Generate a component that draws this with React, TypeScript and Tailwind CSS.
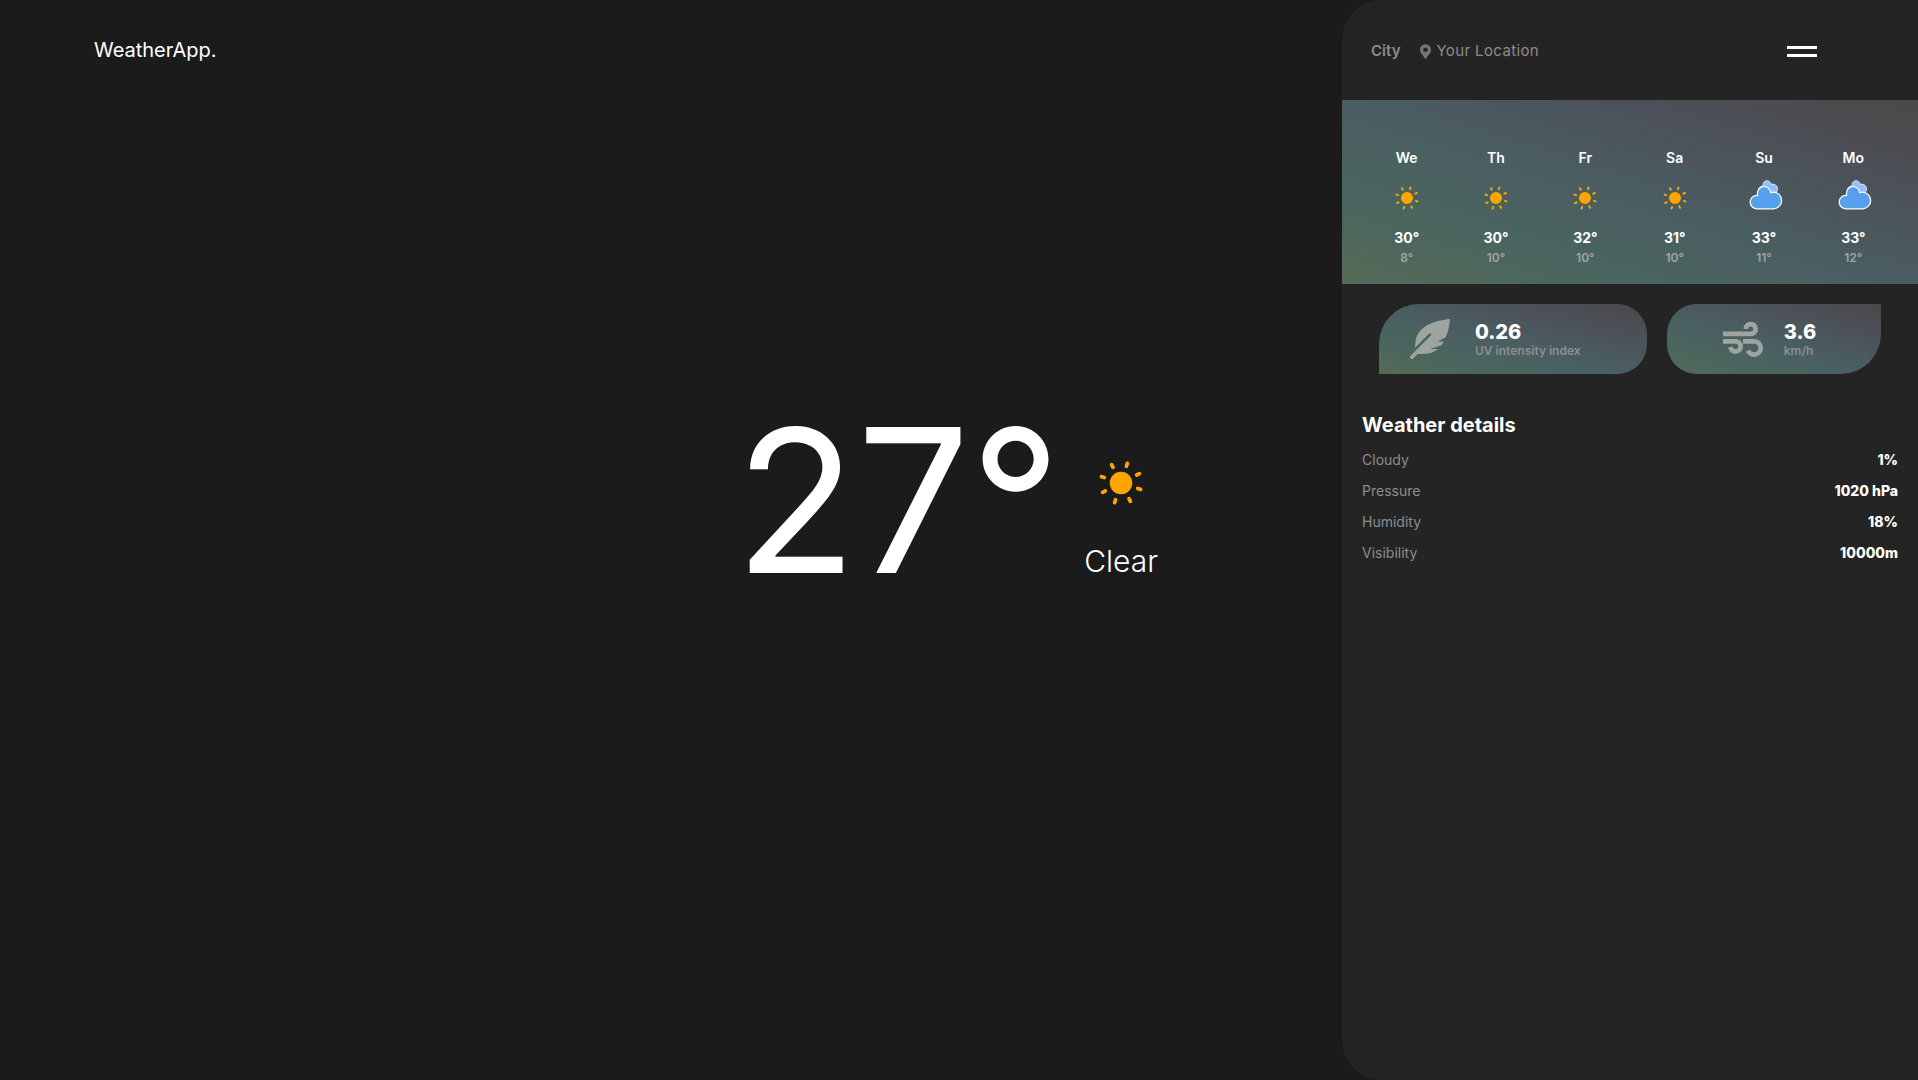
import { FaFeatherAlt, FaMapMarkerAlt } from "react-icons/fa";

const CLOUD =
  "M47.7,35.4c0-4.6-3.7-8.2-8.2-8.2c-1,0-1.9,0.2-2.8,0.5c-0.3-3.4-3.1-6.2-6.6-6.2c-3.7,0-6.7,3-6.7,6.7c0,0.8,0.2,1.6,0.4,2.3c-0.3-0.1-0.7-0.1-1-0.1c-3.7,0-6.7,3-6.7,6.7c0,3.6,2.9,6.6,6.5,6.7l17.2,0C44.2,43.3,47.7,39.8,47.7,35.4z";

function SunIcon({ className }: { className: string }) {
  const angles = [18, 63, 108, 153, 198, 243, 288, 333];
  return (
    <svg viewBox="0 0 64 64" className={className} aria-hidden="true">
      <g transform="translate(32,32)" stroke="#ffa500" strokeWidth="2" strokeLinecap="round">
        {angles.map((a) => (
          <line key={a} x1="0" y1="-9.4" x2="0" y2="-11" transform={`rotate(${a})`} />
        ))}
        <circle r="5" fill="#ffa500" />
      </g>
    </svg>
  );
}

function CloudIcon({ className }: { className: string }) {
  return (
    <svg viewBox="0 0 64 64" className={className} aria-hidden="true">
      <path d={CLOUD} fill="#91c0f8" stroke="#fff" strokeWidth="1.2" strokeLinejoin="round" transform="translate(17,1.8) scale(0.6)" />
      <path d={CLOUD} fill="#57a0ee" stroke="#fff" strokeWidth="1.2" strokeLinejoin="round" transform="translate(2,-1)" />
    </svg>
  );
}

function WindIcon({ className }: { className: string }) {
  return (
    <svg viewBox="0 0 40 40" className={className} fill="none" stroke="currentColor" strokeWidth="4.8" aria-hidden="true">
      <path d="M0 14.9H27.7A4.9 4.9 0 1 0 22.8 10" />
      <path d="M0 22.3H12.5A5.1 5.1 0 1 1 7.5 28" />
      <path d="M20 22.3H31A6.6 6.6 0 1 1 25 31.5" />
    </svg>
  );
}

const forecast = [
  { day: "We", sky: "sun", high: 30, low: 8 },
  { day: "Th", sky: "sun", high: 30, low: 10 },
  { day: "Fr", sky: "sun", high: 32, low: 10 },
  { day: "Sa", sky: "sun", high: 31, low: 10 },
  { day: "Su", sky: "cloud", high: 33, low: 11 },
  { day: "Mo", sky: "cloud", high: 33, low: 12 },
];

const details = [
  { label: "Cloudy", value: "1%" },
  { label: "Pressure", value: "1020 hPa" },
  { label: "Humidity", value: "18%" },
  { label: "Visibility", value: "10000m" },
];

export default function App() {
  return (
    <div className="flex min-h-screen bg-[#1b1b1b] font-['Inter',sans-serif] text-white">
      <main className="flex flex-1 flex-col">
        <header className="flex h-[100px] items-center px-[7%]">
          <a href="#" className="text-xl">WeatherApp.</a>
        </header>
        <section className="flex items-end justify-end pt-[279px] pr-[161px]">
          <h1 className="text-[200px] leading-[242px] font-normal">27°</h1>
          <div className="flex flex-col items-center pb-[42px]">
            <SunIcon className="size-[120px]" />
            <p className="text-3xl font-light">Clear</p>
          </div>
        </section>
      </main>

      <aside className="w-[30.03%] rounded-l-[40px] bg-[#242424]">
        <header className="flex h-[100px] items-center pr-[101px] pl-[29px] pt-0.5 text-[15px] text-[#8c8c8c]">
          <button type="button" className="font-semibold">City</button>
          <button type="button" className="ml-5 flex items-center gap-[5px] tracking-wide">
            <FaMapMarkerAlt className="h-[15px] w-[11px] text-[#747474]" />
            Your Location
          </button>
          <button type="button" aria-label="Menu" className="ml-auto flex w-[30px] flex-col gap-[5px]">
            <span className="h-[3px] w-full bg-white" />
            <span className="h-[3px] w-full bg-white" />
          </button>
        </header>

        <section className="grid h-[184px] grid-cols-6 bg-[linear-gradient(to_top_right,#566b57,#4a655f_25%,#4a5d62_50%,#4c5058_75%,#4b4949)] px-5 pt-12 text-center">
          {forecast.map((f) => (
            <div key={f.day} className="flex flex-col items-center">
              <p className="text-sm leading-5 font-semibold">{f.day}</p>
              {f.sky === "sun" ? <SunIcon className="-my-0.5 size-16" /> : <CloudIcon className="-my-0.5 size-16" />}
              <p className="text-sm leading-5 font-bold">{f.high}°</p>
              <p className="text-xs leading-5 font-semibold text-[#a0a5a5]">{f.low}°</p>
            </div>
          ))}
        </section>

        <section className="grid grid-cols-[5fr_4fr] gap-5 px-[37px] pt-5">
          <div className="flex h-[70px] items-center gap-[25px] rounded-[40px_30px_30px_0] bg-[linear-gradient(to_top_right,#566b57,#4a655f_25%,#4a5d62_50%,#4c5058_75%,#4b4949)] pl-[31px]">
            <FaFeatherAlt className="size-10 text-[#9ea49e]" />
            <div className="pt-1">
              <p className="text-xl leading-5 font-extrabold">0.26</p>
              <p className="text-xs leading-[18px] font-semibold text-[#8c8f91]">UV intensity index</p>
            </div>
          </div>
          <div className="flex h-[70px] items-center gap-[21px] rounded-[30px_0_40px_30px] bg-[linear-gradient(to_top_right,#566b57,#4a655f_25%,#4a5d62_50%,#4c5058_75%,#4b4949)] pl-14">
            <WindIcon className="size-10 text-[#9ea49e]" />
            <div className="pt-1">
              <p className="text-xl leading-5 font-extrabold">3.6</p>
              <p className="text-xs leading-[18px] font-semibold text-[#8c8f91]">km/h</p>
            </div>
          </div>
        </section>

        <section className="px-5 pt-9">
          <h2 className="text-xl leading-[30px] font-bold">Weather details</h2>
          <dl className="pt-1 text-sm leading-[31px]">
            {details.map((d) => (
              <div key={d.label} className="flex justify-between">
                <dt className="text-[#8c8c8c]">{d.label}</dt>
                <dd className="font-extrabold">{d.value}</dd>
              </div>
            ))}
          </dl>
        </section>
      </aside>
    </div>
  );
}
